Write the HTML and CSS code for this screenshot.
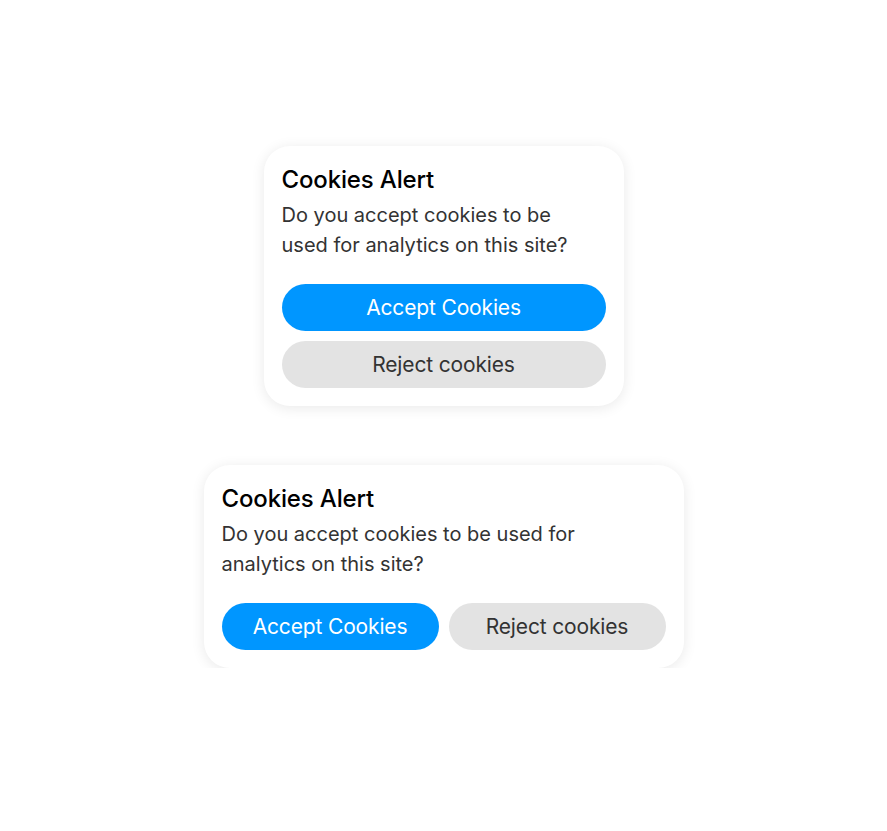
FILE: index.html
```html
<!DOCTYPE html>
<html lang="en">
<head>
<meta charset="utf-8">
<title>Cookies Alert</title>
<link rel="stylesheet" href="styles.css">
</head>
<body>
<main class="page">
  <section class="card card-narrow">
    <h2 class="title">Cookies Alert</h2>
    <p class="text">Do you accept cookies to be used for analytics on this site?</p>
    <div class="actions actions-stack">
      <button class="btn btn-accept">Accept Cookies</button>
      <button class="btn btn-reject">Reject cookies</button>
    </div>
  </section>
  <section class="card card-wide">
    <h2 class="title">Cookies Alert</h2>
    <p class="text">Do you accept cookies to be used for analytics on this site?</p>
    <div class="actions actions-row">
      <button class="btn btn-accept">Accept Cookies</button>
      <button class="btn btn-reject">Reject cookies</button>
    </div>
  </section>
</main>
</body>
</html>
```
FILE: styles.css
```css
* { box-sizing: border-box; }
html, body { margin: 0; padding: 0; background: #fff; }
body { font-family: Inter, "Noto Sans", sans-serif; }
.page {
  display: flex;
  flex-direction: column;
  align-items: center;
  gap: 59px;
  padding-top: 146px;
}
.card {
  background: #fff;
  border-radius: 26px;
  box-shadow: 0 2px 14px rgba(0,0,0,0.09);
  padding: 18px;
}
.card-narrow { width: 360px; }
.card-wide { width: 480px; }
.title {
  margin: 0;
  font-size: 24px;
  line-height: 32px;
  font-weight: 500;
  color: #000;
  letter-spacing: -0.15px;
}
.text {
  margin: 4px 0 0;
  padding-right: 24px;
  font-size: 20px;
  line-height: 30px;
  color: #333;
  letter-spacing: 0;
}
.actions { margin-top: 24px; display: flex; }
.actions-stack { flex-direction: column; gap: 10px; }
.actions-row { gap: 10px; }
.actions-row .btn { flex: 1; }
.btn {
  height: 47px;
  border: none;
  border-radius: 24px;
  font-family: inherit;
  font-size: 21px;
  font-weight: 400;
  letter-spacing: -0.15px;
  cursor: pointer;
}
.btn-accept { background: #0096ff; color: #fff; }
.btn-reject { background: #e3e3e3; color: #333; }
```
